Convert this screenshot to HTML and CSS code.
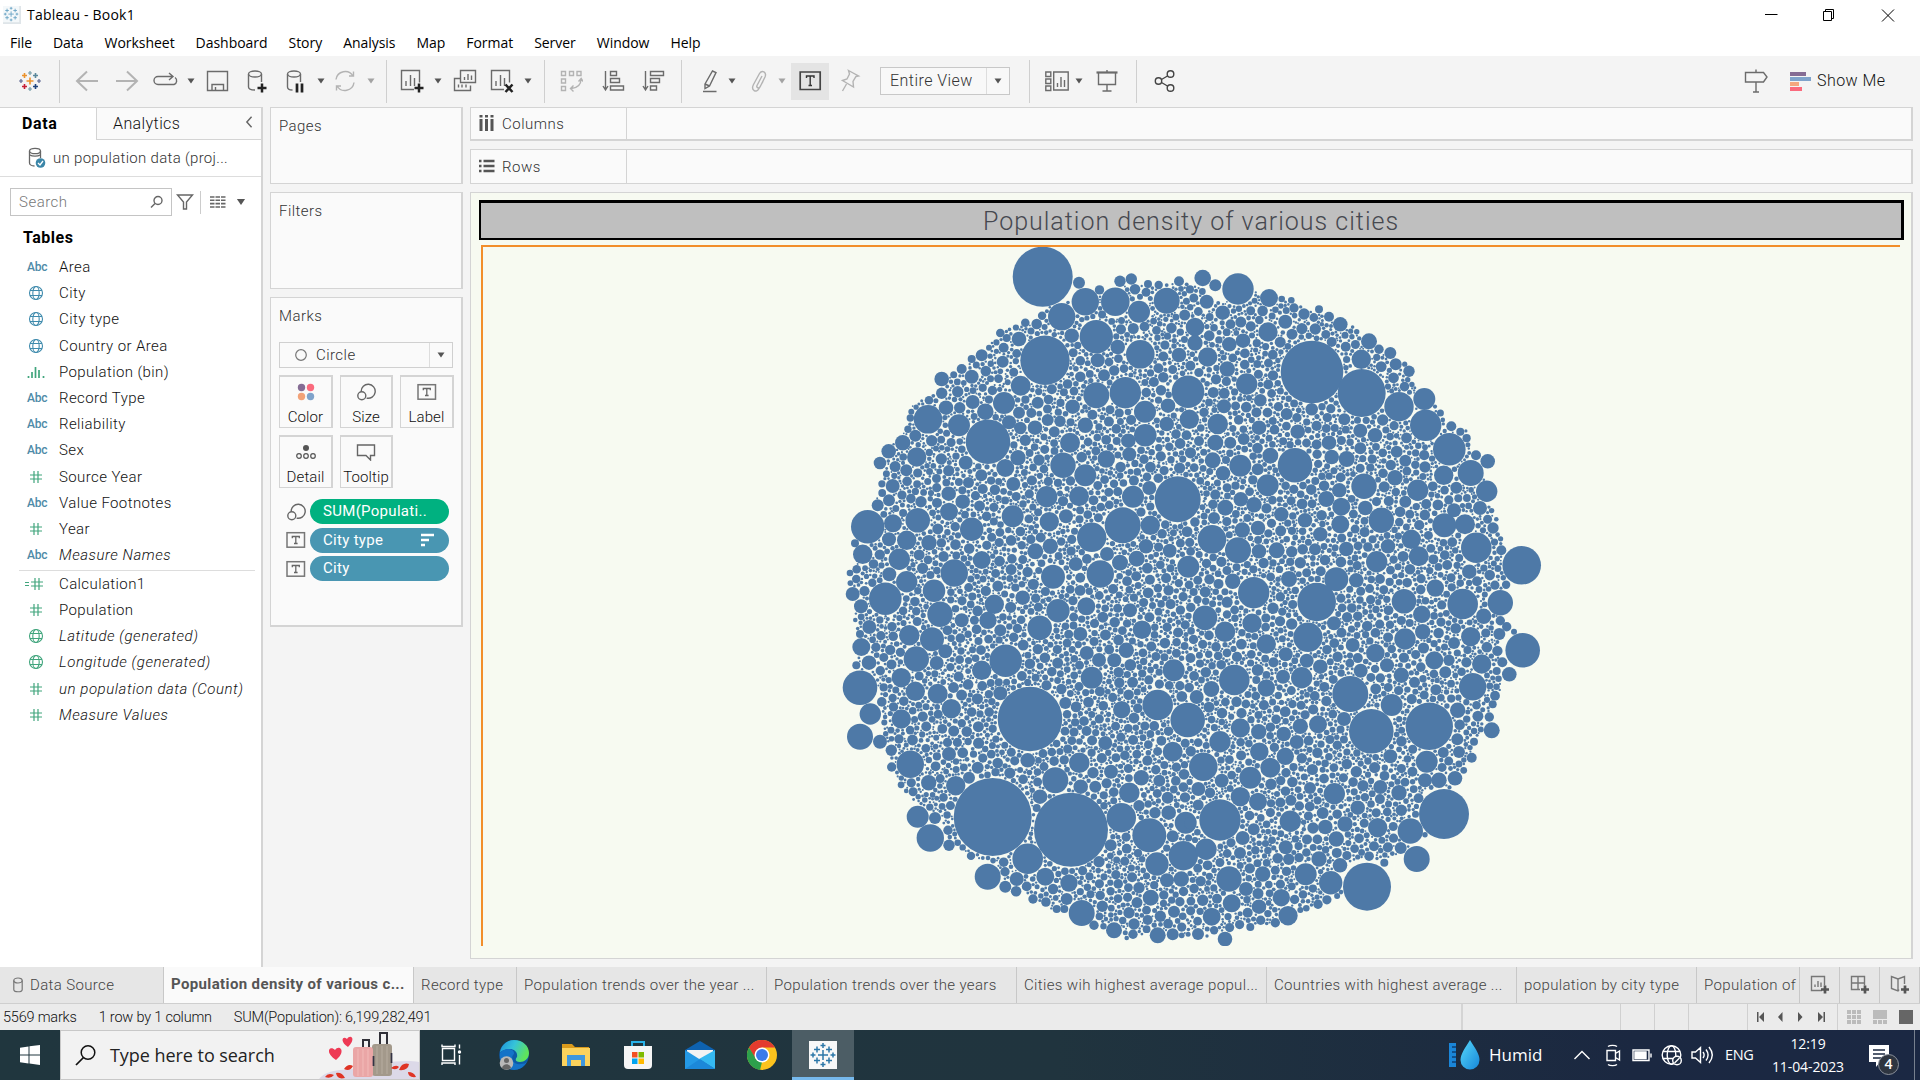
FILE: index.html
```html
<!DOCTYPE html>
<html lang="en">
<head>
<meta charset="utf-8">
<title>Tableau - Book1</title>
<link rel="stylesheet" href="styles.css">
</head>
<body>
<svg class="defs" width="0" height="0">
  <defs>
    <symbol id="caret" viewBox="0 0 8 24"><path d="M0.5 9.5h7L4 14.5z" fill="#555"/></symbol>
    <symbol id="globe" viewBox="0 0 16 16"><g fill="none" stroke="currentColor" stroke-width="1.100"><circle cx="8" cy="8" r="6.500"/><ellipse cx="8" cy="8" rx="3.200" ry="6.500"/><path d="M2 5.500h12M2 10.500h12"/></g></symbol>
    <symbol id="hash" viewBox="0 0 16 16"><path d="M6 2v12M10 2v12M2 6h12M2 10h12" stroke="currentColor" stroke-width="1.2"/></symbol>
    <symbol id="calc" viewBox="0 0 20 16"><path d="M10 2v12M14 2v12M6 6h12M6 10h12M0 6.5h4M0 9.5h4" stroke="currentColor" stroke-width="1.2"/></symbol>
    <symbol id="bin" viewBox="0 0 18 16"><path d="M1.5 12v2M5 8v6M8.5 3v11M12 6v8M16.500 12v2" stroke="currentColor" stroke-width="1.7"/></symbol>
    <symbol id="size" viewBox="0 0 20 18"><g fill="none" stroke="#666" stroke-width="1.4"><path d="M5.200 8.500a7 7 0 1 1 5.400 6.600"/><circle cx="5.800" cy="12.700" r="4"/></g></symbol>
    <symbol id="label" viewBox="0 0 20 18"><rect x="1" y="1.700" width="17.500" height="14.500" fill="none" stroke="#777" stroke-width="1.500"/><path d="M6.300 7.300V5.500h7v1.800M9.800 5.500v7M8 12.500h3.600" fill="none" stroke="#666" stroke-width="1.300"/></symbol>
  </defs>
</svg>

<header class="titlebar">
  <svg class="appicon" viewBox="0 0 20 20"><rect width="20" height="20" fill="#dfe5e9"/><rect width="18" height="18" fill="#f4f8fa"/><path d="M9 6v6M6 9h6M9 1v3M7.500 2.500h3M9 14v3M7.500 15.500h3M2.500 7.500v3M1 9h3M15.500 7.500v3M14 9h3M4.500 3v4M2.500 5h4M13.500 3v4M11.500 5h4M4.500 11v4M2.500 13h4M13.500 11v4M11.500 13h4" stroke="#69a4c4" stroke-width="1"/></svg>
  <span class="apptitle">Tableau - Book1</span>
  <svg class="winbtns" viewBox="0 0 132 16" fill="none" stroke="#000"><path d="M1 7.500h12.500"/><path d="M59.500 4.500h8v9h-8zM61.500 4.500v-2h8v9h-2M118 2.500l12 12M130 2.500l-12 12"/></svg>
</header>

<nav class="menubar"><span>File</span><span>Data</span><span>Worksheet</span><span>Dashboard</span><span>Story</span><span>Analysis</span><span>Map</span><span>Format</span><span>Server</span><span>Window</span><span>Help</span></nav>

<div class="toolbar">
  <svg class="ic" viewBox="0 0 24 24"><g stroke-width="1.600"><path d="M12 8.500v7M8.500 12h7" stroke="#eb912b"/><path d="M6.500 4v5M4 6.500h5" stroke="#eb912b"/><path d="M17.500 4v5M15 6.500h5" stroke="#59879b"/><path d="M6.500 15v5M4 17.500h5" stroke="#c72037"/><path d="M17.500 15v5M15 17.500h5" stroke="#1f447e"/><path d="M12 2v4M10 4h4M12 18v4M10 20h4" stroke="#7199a6" stroke-width="1.200"/><path d="M3 10v4M1 12h4M21 10v4M19 12h4" stroke="#5c6692" stroke-width="1.200"/></g></svg>
  <i class="sep"></i>
  <svg class="ic dim" viewBox="0 0 24 24"><path d="M2 12h21M12 2.500L2 12l10 9.500" stroke-width="2"/></svg>
  <svg class="ic dim" viewBox="0 0 24 24"><path d="M1 12h21M12 2.500L22 12l-10 9.500" stroke-width="2"/></svg>
  <svg class="ic wide" viewBox="0 0 26 24"><path d="M13 15.500H5a4 4 0 0 1 0-8h14M16 4l4 3.500-4 3.500M22 8.500a4 4 0 0 1-1 7h-8"/></svg>
  <svg class="ct"><use href="#caret"/></svg>
  <svg class="ic" viewBox="0 0 24 24"><path d="M2.500 2.500h20v19h-20zM7 21.500v-6h11.500v6M10.500 18v3"/></svg>
  <svg class="ic" viewBox="0 0 24 24"><ellipse cx="11" cy="5" rx="6.500" ry="3"/><path d="M4.500 5v13c0 2 3 3 6.500 3M17.500 5v8"/><path d="M18 14.500v9M13.500 19h9" stroke="#222" stroke-width="2.500"/></svg>
  <svg class="ic" viewBox="0 0 24 24"><ellipse cx="11" cy="5" rx="6.500" ry="3"/><path d="M4.500 5v13c0 2 2.500 3 5 3M17.500 5v8"/><path d="M14 14.500v9M19 14.500v9" stroke="#222" stroke-width="2.700"/></svg>
  <svg class="ct"><use href="#caret"/></svg>
  <svg class="ic dim" viewBox="0 0 24 24"><path d="M3 10.500a9.200 9.200 0 0 1 17-3.500M21 13.500a9.200 9.200 0 0 1-17 3.500M20.500 2.500V7H16M3.500 21.500V17H8"/></svg>
  <svg class="ct fade"><use href="#caret"/></svg>
  <i class="sep"></i>
  <svg class="ic" viewBox="0 0 24 24"><path d="M14 20.500H1.500v-19h18v12M6 17v-5M10.500 17V6M14.500 17V9"/><path d="M19 14.500v9M14.500 19h9" stroke="#222" stroke-width="2.500"/></svg>
  <svg class="ct"><use href="#caret"/></svg>
  <svg class="ic" viewBox="0 0 24 24"><path d="M7.500 1.500h15v12h-15zM11.500 11V8M15 11V5M18.500 11V6.500M7 9.500H1.500v12h16v-5M5.500 18.500v-3M9 18.500v-3M13 18.500v-3"/></svg>
  <svg class="ic" viewBox="0 0 24 24"><path d="M14 20.500H1.500v-19h18v12M6 17v-5M10.500 17V6M14.500 17V9"/><path d="M15.500 15.500l7 7.500M22.500 15.500l-7 7.500" stroke="#222" stroke-width="2.500"/></svg>
  <svg class="ct"><use href="#caret"/></svg>
  <i class="sep"></i>
  <svg class="ic dim" viewBox="0 0 24 24"><path d="M2.500 2.500h4v4h-4zM10.500 2.500h4v4h-4zM18 2.500h4v4h-4zM2.500 10h4v4h-4zM2.500 17.500h4v4h-4zM22 10c0 5-3 9-10 9.500M14.500 16.500L11.500 19.500l3 3M19.500 12.500l2.700-3 2 3"/></svg>
  <svg class="ic" viewBox="0 0 24 24"><path d="M4.500 2v18M2 17l2.500 4 2.500-4M9.500 2.500h6v4h-6zM9.500 9.500h9v4h-9zM9.500 17h13v4h-13z"/></svg>
  <svg class="ic" viewBox="0 0 24 24"><path d="M4.500 2v18M2 17l2.500 4 2.500-4M9.500 2.500h13v4h-13zM9.500 9.500h9v4h-9zM9.500 17h6v4h-6z"/></svg>
  <i class="sep"></i>
  <svg class="ic" viewBox="0 0 24 24"><path d="M7 15l7.500-13 3.500 1.500L11.500 17 7 19.500zM7 15l4.500 2M5 22.500h13.500"/></svg>
  <svg class="ct"><use href="#caret"/></svg>
  <svg class="ic dim" viewBox="0 0 24 24"><path d="M15 7l-5 9.500a1.500 1.500 0 0 0 3 1.500l5-10c2-5-3-7.500-5.500-3.500l-6 11c-3 6 3 9 5.500 4l4-7"/></svg>
  <svg class="ct fade"><use href="#caret"/></svg>
  <span class="toggle"><svg class="ic" viewBox="0 0 24 24"><path d="M2.200 3h20v17.500h-20z" stroke="#444" stroke-width="1.700"/><path d="M8.500 9V7h7.500v2M12.200 7v9.500M10.500 16.500H14" stroke="#333" stroke-width="1.400"/></svg></span>
  <svg class="ic dim" viewBox="0 0 24 24"><path d="M11.500 1.500l10 5.500-2.500.5-3 5 .5 5.500-11-6.500 4.500-1.500 2.500-5zM9.500 15L5.500 22"/></svg>
  <div class="select"><span>Entire View</span><b><svg class="ct"><use href="#caret"/></svg></b></div>
  <i class="sep"></i>
  <svg class="ic" viewBox="0 0 24 24"><path d="M.8 3h5v4.500h-5zM.8 10h5v4.500h-5zM.8 17h5v4.500h-5zM8.700 3h14.500v18H8.700zM12.500 18v-4M16 18V8M19.500 18v-7"/></svg>
  <svg class="ct"><use href="#caret"/></svg>
  <svg class="ic" viewBox="0 0 24 24"><path d="M1.500 3.500h21" stroke-width="2.200"/><path d="M3.500 4v11.500h17V4M12 1v2M12 16v6M7.500 22h9"/></svg>
  <i class="sep"></i>
  <svg class="ic" viewBox="0 0 24 24"><g stroke="#444"><circle cx="5.500" cy="12" r="3.200"/><circle cx="17.500" cy="5" r="3.300"/><circle cx="17.500" cy="19" r="3.300"/><path d="M8.500 10.500l6-3.500M8.500 13.500l6 3.500"/></g></svg>
  <svg class="ic" viewBox="0 0 24 24"><path d="M1.500 3.500h18l3.500 4.500-3.500 5h-18zM12 .5v3M12 13v10M9 23h6"/></svg>
  <div class="showme"><i></i><i></i><i></i><i></i></div>
  <span class="showtext">Show Me</span>
</div>

<main class="workspace">
  <aside class="datapane">
    <div class="ptabs"><b>Data</b><span>Analytics</span><svg viewBox="0 0 10 14"><path d="M8 1L2.500 7 8 13" fill="none" stroke="#666" stroke-width="1.700"/></svg></div>
    <div class="source"><svg viewBox="0 0 18 22" fill="none" stroke="#666" stroke-width="1.300"><ellipse cx="7" cy="4" rx="5.500" ry="2.700"/><path d="M1.500 4v12c0 1.500 2 3 5 3M12.500 4v7M2 8c2 1.500 8 1.500 10 0"/><circle cx="12.500" cy="16" r="4.800" fill="#3b86a8" stroke="none"/><path d="M10 16l2 2 3-4" stroke="#fff"/></svg><span>un population data (proj...</span></div>
    <div class="searchrow">
      <div class="sbox"><span>Search</span><svg viewBox="0 0 14 14" fill="none" stroke="#666" stroke-width="1.400"><circle cx="8" cy="5.500" r="4"/><path d="M5 8.500L1 12.500"/></svg></div>
      <svg class="funnel" viewBox="0 0 18 18"><path d="M1.500 2h15L10.500 9v7h-3V9z" fill="none" stroke="#666" stroke-width="1.400"/></svg>
      <i></i>
      <svg class="grid" viewBox="0 0 16 14"><path d="M0 2h16M0 5.300h16M0 8.600h16M0 12h16" stroke="#666" stroke-width="1.600" stroke-dasharray="4.500 1"/></svg>
      <svg class="big"><use href="#caret"/></svg>
    </div>
    <h2>Tables</h2>
    <ul class="fields">
      <li><em class="abc">Abc</em>Area</li>
      <li><svg class="dim-f"><use href="#globe"/></svg>City</li>
      <li><svg class="dim-f"><use href="#globe"/></svg>City type</li>
      <li><svg class="dim-f"><use href="#globe"/></svg>Country or Area</li>
      <li><svg class="mea-f"><use href="#bin"/></svg>Population (bin)</li>
      <li><em class="abc">Abc</em>Record Type</li>
      <li><em class="abc">Abc</em>Reliability</li>
      <li><em class="abc">Abc</em>Sex</li>
      <li><svg class="mea-f"><use href="#hash"/></svg>Source Year</li>
      <li><em class="abc">Abc</em>Value Footnotes</li>
      <li><svg class="mea-f"><use href="#hash"/></svg>Year</li>
      <li class="gen"><em class="abc">Abc</em>Measure Names</li>
    </ul>
    <ul class="fields measures">
      <li><svg class="mea-f calc"><use href="#calc"/></svg>Calculation1</li>
      <li><svg class="mea-f"><use href="#hash"/></svg>Population</li>
      <li class="gen"><svg class="mea-f"><use href="#globe"/></svg>Latitude (generated)</li>
      <li class="gen"><svg class="mea-f"><use href="#globe"/></svg>Longitude (generated)</li>
      <li class="gen"><svg class="mea-f"><use href="#hash"/></svg>un population data (Count)</li>
      <li class="gen"><svg class="mea-f"><use href="#hash"/></svg>Measure Values</li>
    </ul>
  </aside>

  <section class="cards">
    <div class="card pages">Pages</div>
    <div class="card filters">Filters</div>
    <div class="card marks">
      <div>Marks</div>
      <div class="marktype"><svg class="shape" viewBox="0 0 14 14"><circle cx="7" cy="7" r="5.300" fill="none" stroke="#777" stroke-width="1.200"/></svg><span>Circle</span><b><svg class="ct"><use href="#caret"/></svg></b></div>
      <div class="btns">
        <div><svg viewBox="0 0 20 18"><circle cx="5.500" cy="4.500" r="3.700" fill="#856c94"/><circle cx="14.500" cy="4.500" r="3.700" fill="#fa6a7d"/><circle cx="5.500" cy="13.500" r="3.700" fill="#f2a278"/><circle cx="14.500" cy="13.500" r="3.700" fill="#7fa3cb"/></svg>Color</div>
        <div><svg><use href="#size"/></svg>Size</div>
        <div><svg><use href="#label"/></svg>Label</div>
        <div><svg viewBox="0 0 20 18"><circle cx="10" cy="5" r="3" fill="#555"/><g fill="none" stroke="#555" stroke-width="1.200"><circle cx="3" cy="13" r="2.300"/><circle cx="10" cy="13" r="2.300"/><circle cx="17" cy="13" r="2.300"/></g></svg>Detail</div>
        <div><svg viewBox="0 0 20 18"><path d="M1.500 2h17v10.500h-4V17l-4.500-4.500H1.500z" fill="none" stroke="#666" stroke-width="1.400"/></svg>Tooltip</div>
      </div>
      <div class="pills">
        <div><svg><use href="#size"/></svg><span class="pill green">SUM(Populati..</span></div>
        <div><svg><use href="#label"/></svg><span class="pill">City type<svg class="sorted" viewBox="0 0 14 14"><path d="M0 2h13M0 7h8M0 12h4" stroke="#fff" stroke-width="2.300"/></svg></span></div>
        <div><svg><use href="#label"/></svg><span class="pill">City</span></div>
      </div>
    </div>
  </section>

  <section class="sheet">
    <div class="shelf"><div><svg viewBox="0 0 16 16"><path d="M2 4v12M7.500 4v12M13 4v12" stroke="#555" stroke-width="3"/><path d="M2 0v2.500M7.500 0v2.500M13 0v2.500" stroke="#555" stroke-width="3"/></svg>Columns</div></div>
    <div class="shelf"><div><svg viewBox="0 0 16 16"><path d="M4.500 3h11M4.500 8h11M4.500 13h11M0 3h2.500M0 8h2.500M0 13h2.500" stroke="#555" stroke-width="2.500"/></svg>Rows</div></div>
    <div class="view">
      <h1>Population density of various cities</h1>
      <div class="plot"><svg id="bubbles" viewBox="483 247 1417 699"></svg></div>
    </div>
  </section>
</main>

<nav class="sheettabs">
  <span class="ds"><svg viewBox="0 0 10 16" fill="none" stroke="#777" stroke-width="1.200"><ellipse cx="5" cy="3.500" rx="4.200" ry="2.500"/><path d="M.8 3.500v9c0 3 8.400 3 8.400 0v-9"/></svg>Data Source</span>
  <span class="active">Population density of various c...</span>
  <span class="rt">Record type</span>
  <span>Population trends over the year ...</span>
  <span>Population trends over the years</span>
  <span>Cities wih highest average popul...</span>
  <span>Countries with highest average ...</span>
  <span class="ct-tab">population by city type</span>
  <span class="po">Population of</span>
  <a><svg viewBox="0 0 20 20"><path d="M12 15.500H1.500v-14h13v9M5 12V9.500M8 12V6M11 12V7.500"/><path d="M15 10.500v8M11 14.500h8" class="p"/></svg></a>
  <a><svg viewBox="0 0 20 20"><path d="M10 14.500H1.500v-13h13v9M8 1.500v13M1.500 8h13"/><path d="M15 10.500v8M11 14.500h8" class="p"/></svg></a>
  <a><svg viewBox="0 0 20 20"><path d="M9 14.500L8 16l-6.500-2.500v-12L8 4l6.500-2.500V9M8 4v12"/><path d="M15 10.500v8M11 14.500h8" class="p"/></svg></a>
</nav>

<footer class="status">
  <span>5569 marks</span><span>1 row by 1 column</span><span>SUM(Population): 6,199,282,491</span>
  <div class="boxes"><i></i><i></i><i></i><i></i>
    <em><svg viewBox="0 0 74 12" fill="#555"><path d="M1 1h1.500v10H1zM8 1v10L3 6zM26.500 1v10l-4.500-5zM42 1v10l4.500-5zM62 1v10l5-5zM67.500 1H69v10h-1.500z"/></svg></em>
    <svg class="vw" viewBox="0 0 68 16"><path d="M0 3h14M0 8h14M0 13h14" stroke="#bbb" stroke-width="4" stroke-dasharray="4 1"/><path d="M26 1h14v9H26z" fill="#bbb"/><path d="M26 13h14" stroke="#bbb" stroke-width="4" stroke-dasharray="4 1"/><path d="M52 1h14v14H52z" fill="#666"/></svg>
  </div>
</footer>

<div class="taskbar">
  <div class="start"><svg viewBox="0 0 20 20"><path d="M0 2.700l8.500-1.200v8H0zM9.500 1.300L20 0v9.500H9.500zM0 10.500h8.500v8L0 17.300zM9.500 10.500H20V20L9.500 18.600z" fill="#fff"/></svg></div>
  <div class="tsearch">
    <svg class="mag" viewBox="0 0 22 22"><circle cx="13" cy="8.500" r="6.800" fill="none" stroke="#111" stroke-width="1.500"/><path d="M8.500 13.500L1 21" stroke="#111" stroke-width="1.700"/></svg>
    <span>Type here to search</span>
    <svg class="luggage" viewBox="0 0 100 48"><path d="M0 48c10-12 30-8 45-12s40-8 55-5v17z" fill="#dcd9e8"/><path d="M44 17V9h6v8M61 14V2h7v12" fill="none" stroke="#303038" stroke-width="2"/><rect x="53" y="13" width="20" height="32" rx="3" fill="#a3998b"/><path d="M58 15v28M63 15v28M68 15v28" stroke="#b5ab9d" stroke-width="1.200"/><rect x="34" y="16" width="20" height="30" rx="3" fill="#eaa6a6"/><path d="M39 18v27M44 18v27M49 18v27" stroke="#f0b8b6" stroke-width="1.200"/><path d="M54.500 25v10M72.500 22v10" stroke="#334" stroke-width="1.700"/><path d="M29 16c-9-6-5-12-1-8 3-5 10-1 1 8zM17 29c-12-8-6-15-1-10 4-6 12 1 1 10z" fill="#ee3a55"/><path d="M6 46q3-5 9-2-3 4-9 2zM17 42q6-1 9 5-8 2-9-5zM25 38q4-6 9-3-3 6-9 3zM80 39q3-8 10-6-1 7-10 6zM89 41q6 0 8 5-8 1-8-5zM72 37q5-4 8-1-3 4-8 1z" fill="#df3425"/></svg>
  </div>
  <div class="app"><svg viewBox="0 0 30 30" fill="none" stroke="#fff" stroke-width="1.400"><path d="M5.500 8.500h12v12h-12zM5 4.500v2h13v-2M5 25v-2h13v2M22.500 4.500v4M22.500 15v9.500"/><circle cx="22.500" cy="12" r="1" fill="#fff"/></svg></div>
  <div class="app"><svg viewBox="0 0 30 30"><defs><linearGradient id="eg" x1="0" y1="0" x2="1" y2=".4"><stop offset="0" stop-color="#1b8fdb"/><stop offset=".5" stop-color="#36c3d9"/><stop offset="1" stop-color="#5fe35b"/></linearGradient></defs><circle cx="15" cy="15" r="14.800" fill="#0d5aa7"/><path d="M1 13C2 5 8 0 15 0c9 0 15 6 15 13 0 6-5 9-9 9-5 0-5-3-3-5 1-5-3-8-7-8-5 0-9 2-10 4z" fill="url(#eg)"/><path d="M1 13c6-7 15-4 14 1-4 3-1 12 7 10 3 0 5-1 6-2-3 5-8 8-13 8C7 30 0 23 1 13z" fill="#1473c8"/><circle cx="7.500" cy="23" r="6.800" fill="#b9b9b9"/><circle cx="7.500" cy="20.500" r="2.500" fill="#666"/><path d="M3 28c1-5 8-5 9 0-2 2-7 2-9 0z" fill="#666"/></svg></div>
  <div class="app"><svg viewBox="0 0 30 30"><path d="M1 4h10l3 3h14v19H1z" fill="#d99a1c"/><path d="M1 8h28v18H1z" fill="#fbd25c"/><path d="M6 15h18v11h-4v-6H10v6H6z" fill="#3f97dd"/></svg></div>
  <div class="app"><svg viewBox="0 0 30 30"><path d="M9 7V2h12v5" fill="none" stroke="#29b2e8" stroke-width="2"/><path d="M1 6h28v19q0 4-4 4H5q-4 0-4-4z" fill="#f5f5f5"/><path d="M9 12h5.500v5.500H9z" fill="#f25022"/><path d="M15.500 12H21v5.500h-5.500z" fill="#7fba00"/><path d="M9 18.500h5.500V24H9z" fill="#00a4ef"/><path d="M15.500 18.500H21V24h-5.500z" fill="#ffb900"/></svg></div>
  <div class="app"><svg viewBox="0 0 30 30"><path d="M0 10L15 1l15 9v4H0z" fill="#0e62b0"/><path d="M2 10h26v10H2z" fill="#f3f3f3"/><path d="M0 10l30 19H0z" fill="#2499e5"/><path d="M30 10v19L14 19z" fill="#35b9f1"/><path d="M0 29l15-10 15 10z" fill="#1c88d9"/></svg></div>
  <div class="app"><svg viewBox="0 0 30 30"><circle cx="15" cy="15" r="15" fill="#fcc31e"/><path d="M2 7.500a15 15 0 0 1 26 0H15L8 19z" fill="#e33b2e"/><path d="M2 7.500L9 19l6 3-2 8A15 15 0 0 1 2 7.500z" fill="#2da04c"/><circle cx="15" cy="15" r="7.500" fill="#fff"/><circle cx="15" cy="15" r="6" fill="#3b7bea"/></svg></div>
  <div class="app current"><svg viewBox="0 0 30 30"><rect x="1" y="1" width="28" height="28" fill="#f8f8f8"/><path d="M15 10v10M10 15h10M15 3v5M12.500 5.500h5M15 22v5M12.500 24.500h5M5 12.500v5M2.500 15h5M25 12.500v5M22.500 15h5M9 6.500v6M6 9.500h6M21 6.500v6M18 9.500h6M9 17.500v6M6 20.500h6M21 17.500v6M18 20.500h6" stroke="#2d77a8" stroke-width="1.500"/></svg></div>
  <div class="tray">
    <svg class="humid" viewBox="0 0 32 32"><defs><linearGradient id="drop" x1="0" y1="0" x2="1" y2="1"><stop offset="0" stop-color="#57d8fa"/><stop offset="1" stop-color="#1687da"/></linearGradient></defs><path d="M0 4h7v24H0z" fill="#1a86d9"/><path d="M3 8h4M3 13h4M3 18h4M3 23h4" stroke="#0b3f75" stroke-width="1.500"/><path d="M21 1c5 8 9.500 14 9.500 20a9.500 9.500 0 0 1-19 0C11.500 15 16 9 21 1z" fill="url(#drop)"/></svg>
    <span class="hum">Humid</span>
    <svg class="sys" viewBox="0 0 144 24" fill="none" stroke="#fff" stroke-width="1.400"><path d="M1.500 16L9 8.500l7.500 7.500M34 7.500h8.500v10H34zM42.500 10.500l4-2.500v9l-4-2.500M35 3.500c2-1.500 7-1.500 9 0M35 21.500c2 1.500 7 1.500 9 0M60 7h16v10.500H60zM78 10.500v4"/><path d="M62 9h11v6.500H62z" fill="#fff"/><circle cx="98.500" cy="12" r="9.300"/><ellipse cx="98.500" cy="12" rx="4.300" ry="9.300"/><path d="M90 8.500h17M90 15.500h17M119 9h3.500l5-4.500v15l-5-4.500H119zM130 9c1.500 2 1.500 4 0 6M133 6.500c3 4 3 7 0 11M136 4c4.500 5.500 4.500 10.500 0 16"/><circle cx="104" cy="17.500" r="4.300" fill="#1d2b40"/><path d="M101.500 20l5-5"/></svg>
    <span class="lang">ENG</span>
    <span class="clock">12:19<br>11-04-2023</span>
    <div class="note"><svg viewBox="0 0 20 22"><path d="M0 0h20v17h-9l-4 5v-5H0z" fill="#fff"/><path d="M4 5h12M4 9h12M4 13h8" stroke="#1b2840" stroke-width="1.300"/></svg><b>4</b></div>
  </div>
</div>
<script src="bubbles.js"></script>
</body>
</html>
```
FILE: styles.css
```css
* { box-sizing: border-box; }
body { margin: 0; width: 1920px; height: 1080px; overflow: hidden; display: flex; flex-direction: column; background: #f4f4f4; font: 300 15px/20px Roboto, "Liberation Sans", sans-serif; color: #333; }
svg { display: block; flex: none; }
.defs { position: absolute; }
.titlebar { height: 28px; background: #fff; display: flex; align-items: center; padding: 1px 24px 0 3px; color: #000; font: 14px/20px "Open Sans", sans-serif; }
.appicon { width: 18px; height: 18px; }
.apptitle { margin-left: 6px; flex: 1; letter-spacing: .2px; }
.winbtns { width: 132px; height: 16px; }
.menubar { height: 28px; background: #fff; display: flex; gap: 21px; padding: 5px 10px 0; color: #000; font: 14px/20px "Open Sans", sans-serif; letter-spacing: -.04px; }

.toolbar { height: 51px; padding: 0 0 1px 18px; display: grid; align-items: center; background: #f4f4f4;
  grid-template-columns: 41px 16px 40px 38px 34px 18px 39px 39px 34px 16px 34px 19px 14px 34px 19px 37px 34px 20px 15px 42px 40px 40px 17px 30px 19px 31px 13px 46px 43px 149px 16px 30px 20px 41px 17px 591px 46px 27px auto; }
.ic { width: 24px; height: 24px; fill: none; stroke: #6b6b6b; stroke-width: 1.4; }
.wide { width: 26px; }
.dim { stroke: #b3b3b3; }
.ct { width: 8px; height: 24px; }
.fade { opacity: .5; }
.sep { width: 1px; height: 43px; background: #cfcfcf; }
.toggle { width: 38px; height: 37px; background: #e4e4e4; display: grid; place-items: center; }
.select { width: 130px; height: 28px; border: 1px solid #c8c8c8; background: #f8f8f8; display: flex; font-size: 16px; line-height: 26px; color: #333; letter-spacing: .45px; }
.select span { flex: 1; padding-left: 9px; }
.select b, .marktype b { width: 23px; border-left: 1px solid #ddd; display: grid; place-items: center; }
.showme { display: flex; flex-direction: column; gap: 1px; }
.showme i { height: 4px; width: 16px; background: #856c94; }
.showme i:nth-child(2) { width: 21px; background: #7fa3cb; }
.showme i:nth-child(3) { width: 9px; background: #f4a77f; }
.showme i:nth-child(4) { width: 12px; background: #fa6a7d; }
.showtext { font-size: 16px; color: #111; letter-spacing: .45px; }

.workspace { height: 860px; display: flex; }
.datapane { width: 263px; border-right: 2px solid #d4d4d4; background: #fff; color: #111; }
.ptabs { height: 33px; border-top: 1px solid #d4d4d4; display: flex; align-items: center; font-size: 16px; }
.ptabs b { width: 96px; padding-left: 22px; color: #000; font-weight: 700; letter-spacing: .6px; }
.ptabs span { flex: 1; height: 32px; padding: 6px 0 0 16px; border: solid #d4d4d4; border-width: 0 0 1px 1px; background: #fafafa; letter-spacing: .4px; }
.ptabs svg { width: 17px; height: 32px; padding: 8px 7px 11px 0; background: #fafafa; border-bottom: 1px solid #d4d4d4; }
.source { height: 37px; border-bottom: 1px solid #ddd; display: flex; align-items: center; gap: 7px; padding-left: 28px; color: #333; letter-spacing: .3px; }
.source svg { width: 18px; height: 22px; }
.searchrow { display: flex; align-items: center; padding: 11px 0 0 10px; }
.sbox { width: 162px; height: 28px; border: 1px solid #c4c4c4; display: flex; align-items: center; justify-content: space-between; padding: 0 7px 0 8px; color: #777; letter-spacing: .5px; }
.sbox svg { width: 14px; height: 14px; }
.funnel { width: 18px; height: 18px; margin-left: 4px; }
.searchrow i { width: 1px; height: 23px; background: #ccc; margin: 0 9px 0 6px; }
.grid { width: 16px; height: 14px; }
.big { width: 10px; height: 28px; margin-left: 10px; }
.datapane h2 { margin: 12px 0 6px 23px; font: 700 16px/20px Roboto, sans-serif; color: #000; letter-spacing: .5px; }
.fields { list-style: none; margin: 0; padding: 0; }
.fields li { height: 26.2px; display: flex; align-items: center; padding-left: 27px; white-space: nowrap; letter-spacing: .4px; }
.fields svg { width: 18px; height: 16px; margin-right: 14px; }
.fields .calc { width: 20px; margin: 0 14px 0 -2px; }
.abc { width: 32px; font: 500 12px/16px Roboto, sans-serif; letter-spacing: -.2px; color: #4e8ba8; }
.dim-f { color: #3f8bad; }
.mea-f { color: #41a57d; }
.fields .gen { font-style: italic; letter-spacing: .55px; }
.measures { margin: 0 6px 0 0; position: relative; padding-top: 2.500px; }
.measures::before { content: ""; position: absolute; left: 19px; right: 0; top: 2px; height: 1px; background: #ddd; }

.cards { width: 200px; margin-left: 7px; padding-right: 7px; display: flex; flex-direction: column; gap: 8px; }
.card { border: 1px solid #d4d4d4; border-width: 1px 2px 1px 1px; background: #fafafa; padding: 8px; letter-spacing: .45px; }
.pages { height: 77px; }
.filters { height: 97px; }
.marks { height: 330px; border-bottom-width: 2px; }
.marktype { margin-top: 16px; height: 26px; border: 1px solid #d0d0d0; display: flex; align-items: center; padding-left: 14px; }
.marktype span { flex: 1; padding-left: 8px; }
.shape { width: 14px; height: 14px; }
.marktype b { height: 24px; }
.btns { margin-top: 7px; display: grid; grid-template-columns: 54px 53px 54px; gap: 7px; color: #111; }
.btns div { height: 53px; border: 1px solid #d4d4d4; border-width: 2px 2px 1px 1px; display: flex; flex-direction: column; align-items: center; padding-top: 6px; gap: 6px; letter-spacing: .1px; }
.btns svg, .pills > div > svg { width: 20px; height: 18px; }
.pills { display: flex; flex-direction: column; gap: 3.500px; margin-top: 11px; padding-left: 7px; }
.pills > div { display: flex; align-items: center; gap: 4px; }
.pill { width: 139px; height: 25px; border-radius: 13px; background: #4996b2; color: #fff; font-weight: 400; letter-spacing: .3px; padding-left: 13px; display: flex; align-items: center; line-height: 25px; }
.green { background: #00b180; }
.sorted { width: 14px; height: 14px; margin: 0 14px 0 auto; }

.sheet { width: 1443px; display: flex; flex-direction: column; gap: 8px; }
.shelf { height: 35px; border: 1px solid #d4d4d4; border-width: 1px 2px 1px 1px; background: #fafafa; letter-spacing: .5px; }
.shelf:first-child { height: 34px; border-bottom-width: 2px; }
.shelf div { width: 156px; height: 100%; border-right: 1px solid #d4d4d4; display: flex; align-items: center; gap: 7px; padding: 1px 0 0 8px; }
.shelf svg { width: 16px; height: 16px; margin-top: -2px; }
.view { height: 767px; border: 1px solid #d4d4d4; border-width: 1px 2px 1px 1px; background: #f7faf1; padding: 7px 7px 0 8px; }
.view h1 { margin: 0; height: 40px; border: solid #000; border-width: 3px 3px 2px 2px; background: #bfbfbf; color: #46484f; text-align: center; font: 300 25px/37px Roboto, sans-serif; letter-spacing: 1px; }
.plot { margin: 5px 4px 0 2px; height: 701px; border: solid #f28e2b; border-width: 2px 0 0 2px; }
.plot svg { width: 1417px; height: 699px; fill: #4e79a7; }

.sheettabs { height: 37px; border-bottom: 1px solid #cfcfcf; background: #e6e6e6; display: flex; color: #444; letter-spacing: .36px; }
.sheettabs span { width: 250px; border-right: 1px solid #c8c8c8; line-height: 37px; padding-left: 7px; white-space: nowrap; overflow: hidden; }
.sheettabs .ds { width: 164px; display: flex; align-items: center; gap: 7px; padding-left: 13px; }
.ds svg { width: 10px; height: 16px; }
.sheettabs .active { background: #fafafa; font-weight: 700; letter-spacing: .37px; line-height: 35px; color: #555; }
.sheettabs .rt { width: 103px; }
.sheettabs .ct-tab { width: 180px; }
.sheettabs .po { width: 103px; }
.sheettabs a { width: 40px; border-right: 1px solid #c8c8c8; display: grid; place-items: center; }
.sheettabs a svg { width: 20px; height: 20px; fill: none; stroke: #777; stroke-width: 1.400; }
.sheettabs .p { stroke: #555; stroke-width: 2.700; }
.status { height: 26px; background: #ebebeb; display: flex; padding-left: 3px; gap: 22px; line-height: 28px; font-size: 14.500px; letter-spacing: -.2px; color: #111; }
.boxes { margin-left: auto; width: 459px; display: grid; grid-template-columns: 158px 34px 34px 59px 90px 84px; border-left: 2px solid #d4d4d4; }
.boxes i, .boxes em { border-right: 1px solid #d0d0d0; }
.boxes em { display: grid; place-items: center; }
.boxes em svg { width: 74px; height: 12px; }
.vw { width: 68px; height: 16px; margin: 5px 0 0 9px; }

.taskbar { height: 50px; background: linear-gradient(90deg, #20363e 0, #20343e 55%, #1b2841 85%, #1b2843 100%); display: flex; color: #fff; font-family: "Open Sans", sans-serif; font-weight: 400; }
.start { width: 60px; display: grid; place-items: center; }
.start svg { width: 20px; height: 20px; }
.tsearch { width: 360px; border: 1px solid #c8c8c8; background: #f2f2f2; color: #222; display: flex; align-items: center; padding-left: 14px; font-size: 18px; letter-spacing: -.05px; }
.mag { width: 22px; height: 22px; margin-right: 13px; }
.tsearch span { flex: 1; white-space: nowrap; }
.luggage { width: 100px; height: 48px; }
.app { width: 62px; display: grid; place-items: center; }
.app svg { width: 30px; height: 30px; margin-left: 2px; }
.current { background: #4c5d65; border-bottom: 3px solid #76b9ed; padding-top: 3px; }
.current svg { margin-left: 0; }
.tray { margin-left: auto; width: 471px; display: flex; align-items: center; }
.humid { width: 32px; height: 32px; }
.hum { font-size: 17px; width: 92px; padding-left: 8px; }
.sys { width: 144px; height: 24px; }
.lang { width: 52px; padding-left: 8px; font-size: 14.500px; letter-spacing: -.3px; }
.clock { width: 78px; text-align: center; font-size: 14px; line-height: 23px; letter-spacing: -.1px; white-space: nowrap; }
.note { position: relative; margin-left: 22px; width: 46px; height: 50px; border-right: 1px solid #77808e; padding-top: 15px; }
.note svg { width: 20px; height: 22px; }
.note b { position: absolute; left: 9px; top: 24px; width: 21px; height: 21px; border: 1px solid #8b919b; border-radius: 50%; background: #2e3540; font: 600 14px/18px "Open Sans", sans-serif; text-align: center; }
```
FILE: bubbles.js
```js
// Largest marks, grouped in four tiles. Each triple is x, y, radius in thirds of a pixel.
const tiles = [
  { x: 830, y: 230, marks: `638,140,90 766,215,41 856,215,43 695,260,41 747,158,18 870,154,17 904,147,17 915,178,16 927,245,33 1010,212,39 799,320,50 645,391,74 586,278,13 620,282,16 567,327,22 725,317,22 863,351,22 931,373,43 1047,375,22 803,391,21 455,376,18 395,417,15 335,447,22 425,440,21 518,395,18 572,467,30 522,519,33 886,488,47 799,496,39 1074,485,49 294,568,43 428,516,21 466,545,25 348,533,22 387,586,33 474,635,67 537,577,21 615,593,22 945,545,33 728,530,22 1078,568,29 766,586,23 946,616,34 720,638,30 218,638,23 176,664,22 150,699,19 260,681,29 188,768,21 564,683,23 526,714,27 699,706,38 766,736,33 829,687,26 895,632,22 898,673,21 650,800,32 747,799,30 909,800,33 958,774,21 1043,808,69 878,886,54 961,886,29 785,922,44 548,859,33 658,875,29 708,859,21 356,791,22 398,815,22 357,845,27 263,871,37 425,898,35 113,890,50 189,880,27 230,931,29 297,938,23 177,928,21 98,973,29 208,988,32 230,1055,32 178,1033,21 373,1029,41 455,990,27 312,1082,34 68,1092,21 616,964,24 661,949,23 669,1040,36 811,1032,41 831,972,21 870,998,24 920,986,24 948,949,22 1019,962,21 1075,1010,33 1014,527,22 1010,582,22 143,826,18 177,811,18 256,617,18 273,815,17 335,490,17 383,485,17 389,533,17 305,632,17 334,687,17 229,721,18 407,698,21 454,736,18 550,762,21 623,518,18 567,548,18 653,570,18 690,574,17 571,594,19 586,631,17 627,690,17 822,436,18 751,440,16 737,1002,21 425,387,12 511,309,13 530,324,12 477,353,9 297,511,13 244,545,9 241,564,11 75,940,12 80,1018,13 60,1029,10 79,1047,13 1047,154,15 954,162,12` },
  { x: 1190, y: 230, marks: `38,144,25 76,166,18 144,177,47 50,215,21 237,204,27 98,248,22 312,234,14 342,252,17 387,238,12 417,260,15 451,283,22 286,275,21 234,306,29 15,291,28 376,297,17 366,426,94 159,332,22 118,343,22 15,339,23 53,381,29 112,417,23 170,462,32 514,388,29 537,334,24 601,369,18 617,403,18 657,424,17 515,489,72 627,530,44 703,507,33 707,586,47 778,658,49 842,729,39 893,694,22 890,784,32 784,589,15 811,605,12 858,676,15 761,736,29 425,336,15 467,350,15 102,529,21 83,582,31 207,593,22 290,552,18 211,511,19 365,538,19 463,568,18 323,605,22 511,602,21 555,616,22 578,570,17 76,638,24 121,638,18 68,691,24 161,627,18 241,677,24 151,707,33 99,730,22 315,706,52 203,718,18 417,638,22 425,681,22 470,687,24 233,766,33 511,655,18 620,665,18 646,692,18 615,743,23 522,769,38 683,781,32 705,711,17 799,773,18 870,834,21 825,883,30 763,886,36 792,841,21 859,953,46 995,1006,58 448,781,22 409,807,24 454,830,27 526,834,22 574,871,38 152,808,22 192,824,23 106,833,24 274,853,22 345,871,22 451,883,27 391,913,22 66,928,43 144,961,39 157,900,23 204,894,22 207,964,22 260,961,24 469,957,22 594,949,22 664,928,29 686,979,30 560,995,32 646,815,18 439,1048,36 128,1054,23 297,1047,24 499,1051,22 191,1088,47 380,1116,58 736,1074,26 838,1025,22 909,894,17 934,961,15 72,864,18 375,958,18 331,998,17 305,965,17 304,211,10 275,207,10 567,358,14 500,305,8 919,868,7` },
  { x: 830, y: 590, marks: `166,26,49 93,49,21 118,111,21 94,171,27 117,218,22 330,73,38 238,136,31 306,148,36 259,207,38 346,184,21 320,219,21 395,91,21 493,43,29 474,91,26 629,113,37 684,62,35 769,49,27 751,132,21 578,23,22 511,121,18 900,61,21 936,119,28 889,181,23 770,189,21 807,210,21 853,211,21 901,225,18 785,263,33 1031,241,33 527,212,49 455,241,29 90,293,52 214,263,29 256,304,29 323,311,30 364,356,29 214,387,29 121,372,32 90,440,39 150,455,21 184,481,17 185,531,14 241,523,41 600,387,97 511,310,21 706,339,18 875,359,26 983,345,46 1073,390,52 826,459,21 1028,485,30 748,518,31 843,545,21 934,563,23 593,511,22 357,492,21 676,571,39 377,587,29 296,578,23 417,563,18 443,533,18 752,590,22 796,590,18 630,620,22 488,681,117 723,719,111 874,683,44 898,608,31 958,736,51 1067,698,33 1060,797,44 981,822,35 593,806,46 263,680,33 315,684,18 301,744,41 357,766,17 473,860,39 526,890,18 560,867,21 646,860,27 717,879,26 710,927,18 755,969,39 609,927,14 852,1021,24 909,1033,14 792,1006,14 983,1036,24 1028,1033,18 962,923,24 1011,871,21 1054,867,23 842,766,18 897,968,17 1032,965,18 1016,668,22 1028,739,18 817,949,17 927,893,17 354,721,14 912,1002,17 991,979,17 807,815,17 1013,623,18 988,572,18 789,548,17 525,845,14 620,654,12 603,731,7 79,226,12 90,132,12 76,90,7 151,242,14 890,1044,7 680,957,12 703,957,12 383,758,10 927,647,17 975,668,17` },
  { x: 1190, y: 590, marks: `45,83,37 105,125,31 186,100,29 229,162,29 354,142,44 287,193,21 350,212,21 391,230,22 133,270,46 203,240,18 229,294,26 335,263,32 279,260,21 64,297,24 20,321,21 481,312,54 605,345,33 544,424,67 718,409,71 462,387,21 384,403,27 331,409,23 151,414,29 206,425,23 281,432,22 320,456,21 90,455,32 40,530,43 208,485,28 286,499,26 241,533,30 181,563,33 151,620,29 204,635,27 90,690,62 95,572,21 25,597,21 243,583,17 642,34,37 695,73,26 818,42,46 881,79,23 931,38,38 998,181,52 958,253,22 928,132,18 842,140,29 698,125,23 645,147,32 733,211,27 875,222,29 848,290,41 634,256,23 766,247,18 556,189,28 488,165,21 512,242,21 591,226,21 432,100,21 803,361,23 905,421,24 845,503,15 795,565,22 747,571,23 705,571,21 710,515,33 802,448,18 807,486,18 762,672,75 661,723,38 680,807,39 632,774,18 531,890,72 422,878,35 450,826,22 387,807,23 347,853,33 294,977,29 274,923,26 301,694,32 433,611,32 571,591,21 627,608,23 503,653,22 563,713,29 465,702,23 406,711,22 439,747,23 369,714,17 158,744,21 191,718,18 287,772,21 117,867,38 48,778,32 150,789,18 218,852,23 168,897,21 125,940,27 207,950,22 65,980,27 105,1047,22 24,1032,18 173,968,15 256,998,14 38,931,17 601,499,21 499,545,17 519,587,17 384,943,14 296,808,17 263,805,16 305,102,17 792,159,18 777,211,17 249,55,17 634,661,17 398,669,18 360,594,18 0,700,18 552,769,15 583,818,12 972,125,9 950,110,14 937,217,15 931,92,14 181,1011,12 331,960,9 349,955,10 852,455,12 898,381,14 908,343,12 705,734,8 51,1038,5` }
];

// Edge of the packed cluster, in page pixels.
const outline = [[1190,284],[1168,284],[1130,285],[1115,288],[1098,289],[1088,299],[1046,306],[1040,320],[1017,326],[999,334],[985,351],[965,368],[946,379],[932,395],[913,405],[906,430],[888,450],[884,473],[879,494],[872,509],[861,530],[856,543],[858,560],[849,580],[853,600],[857,620],[856,645],[860,667],[880,690],[883,713],[885,735],[888,754],[896,769],[899,786],[914,800],[929,809],[942,817],[948,838],[959,848],[973,858],[990,859],[1003,870],[1007,891],[1030,894],[1047,908],[1063,912],[1080,911],[1093,924],[1127,935],[1145,934],[1188,936],[1210,932],[1227,931],[1250,926],[1273,923],[1300,912],[1323,902],[1341,895],[1342,866],[1357,858],[1383,859],[1397,854],[1420,839],[1421,798],[1424,789],[1453,788],[1464,771],[1469,758],[1478,738],[1486,718],[1494,703],[1501,690],[1499,667],[1499,637],[1498,617],[1504,600],[1509,587],[1503,545],[1495,520],[1489,503],[1486,478],[1469,447],[1466,430],[1448,423],[1436,406],[1413,386],[1408,366],[1391,354],[1371,344],[1356,329],[1341,320],[1317,314],[1290,301],[1270,298],[1255,292],[1223,303],[1210,300],[1203,290]];

const cell = 14, grid = new Map(), circles = [];
const key = (i, j) => i * 1000 + j;
function add(x, y, r) {
  const c = { x, y, r };
  circles.push(c);
  for (let i = Math.floor((x - r - 6) / cell); i <= (x + r + 6) / cell; i++)
    for (let j = Math.floor((y - r - 6) / cell); j <= (y + r + 6) / cell; j++) {
      const k = key(i, j);
      if (!grid.has(k)) grid.set(k, []);
      grid.get(k).push(c);
    }
}
for (const t of tiles)
  for (const m of t.marks.split(" ")) {
    const [x, y, r] = m.split(",").map(Number);
    add(t.x + x / 3, t.y + y / 3, r / 3);
  }

let seed = 5569;
function random() {
  seed = (seed + 0x6D2B79F5) | 0;
  let t = Math.imul(seed ^ (seed >>> 15), 1 | seed);
  t = (t + Math.imul(t ^ (t >>> 7), 61 | t)) ^ t;
  return ((t ^ (t >>> 14)) >>> 0) / 4294967296;
}
function inside(x, y) {
  let hit = false;
  for (let i = 0, j = outline.length - 1; i < outline.length; j = i++) {
    const [xi, yi] = outline[i], [xj, yj] = outline[j];
    if ((yi > y) !== (yj > y) && x < (xj - xi) * (y - yi) / (yj - yi) + xi) hit = !hit;
  }
  return hit;
}
function clearance(x, y) {
  let d = 99;
  for (const c of grid.get(key(Math.floor(x / cell), Math.floor(y / cell))) || [])
    d = Math.min(d, Math.hypot(c.x - x, c.y - y) - c.r);
  return d;
}

// Fill the gaps with ever smaller marks.
const passes = [[5.6, 4.4, 5000], [4.6, 3.4, 11000], [3.6, 2.5, 22000], [2.7, 1.7, 50000], [1.9, 1.2, 90000], [1.4, .9, 70000]];
for (const [max, min, tries] of passes)
  for (let n = 0; n < tries; n++) {
    const x = 845 + random() * 670, y = 280 + random() * 660;
    const d = clearance(x, y) - .05;
    if (d < min || !inside(x, y)) continue;
    add(x, y, Math.min(d, min + random() * (max - min)));
  }

document.getElementById("bubbles").innerHTML =
  circles.map(c => `<circle cx="${c.x.toFixed(1)}" cy="${c.y.toFixed(1)}" r="${c.r.toFixed(1)}"/>`).join("");
```
